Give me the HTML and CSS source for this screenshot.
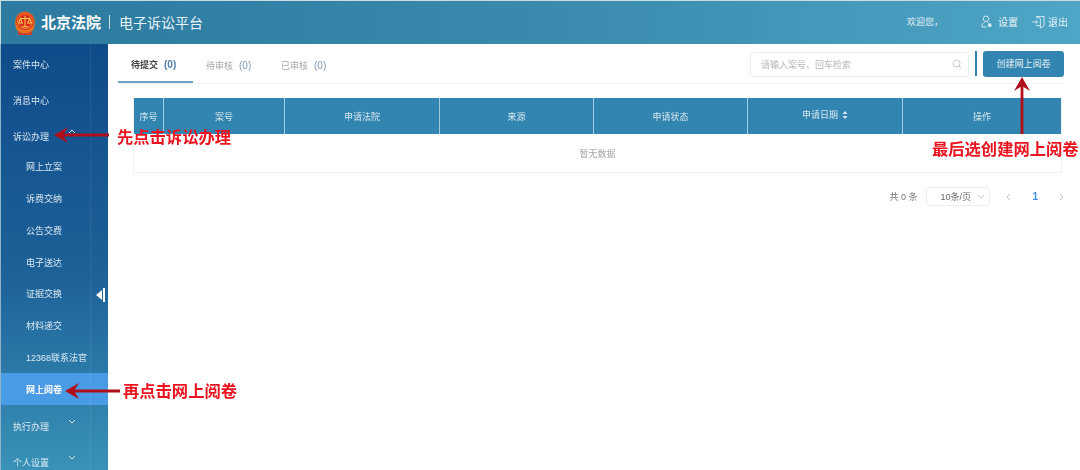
FILE: index.html
```html
<!DOCTYPE html>
<html lang="zh-CN">
<head>
  <meta charset="UTF-8">
  <title>电子诉讼平台</title>
  <link rel="stylesheet" href="styles.css">
</head>
<body>
  <div class="app">
    <header class="topbar">
      <svg class="emblem" viewBox="0 0 24 28">
        <path d="M3 22 Q-1 12 4 5 Q12 -2 20 5 Q25 12 21 22 Q12 29 3 22Z" fill="#e8701e"/>
        <circle cx="12" cy="12" r="9.500" fill="#dc2a1c"/>
        <circle cx="12" cy="12" r="8" fill="none" stroke="#f5a83a" stroke-width="0.8"/>
        <path d="M12 6v12M7 9h10M7 9l-2 5h4zM17 9l-2 5h4zM8.500 18h7" fill="none" stroke="#f8cf55" stroke-width="1.100"/>
        <path d="M4 23 Q12 28 20 23 L19 27 H5Z" fill="#e03a1c"/>
      </svg>
      <span class="brand">北京法院</span>
      <span class="brand-sep"></span>
      <span class="platform">电子诉讼平台</span>
      <div class="topbar-right">
        <span class="welcome">欢迎您，</span>
        <a class="top-link">
          <svg class="top-icon" viewBox="0 0 12 14"><circle cx="5.500" cy="4" r="3" fill="none" stroke="#dceef5"/><path d="M1 13c0-3 1.500-4.500 3-5M7 8c.7.300 1.200.700 1.500 1.200M1 13h5" fill="none" stroke="#dceef5"/><circle cx="9.500" cy="11" r="2" fill="#dceef5"/></svg>
          设置
        </a>
        <a class="top-link">
          <svg class="top-icon exit" viewBox="0 0 14 14"><path d="M5 3V1h8v10l-4 2.500V3.500L5 1M5 10v1h4" fill="none" stroke="#dceef5"/><path d="M0 7h6M4 5l2 2-2 2" fill="none" stroke="#dceef5"/></svg>
          退出
        </a>
      </div>
    </header>

    <div class="layout">
      <aside class="sidebar">
        <div class="nav-item">案件中心</div>
        <div class="nav-item">消息中心</div>
        <div class="nav-item">诉讼办理<svg class="chev" viewBox="0 0 8 5"><path d="M1 4l3-3 3 3" fill="none" stroke="#cfe3ee"/></svg></div>
        <div class="sub-list">
          <div class="sub-item">网上立案</div>
          <div class="sub-item">诉费交纳</div>
          <div class="sub-item">公告交费</div>
          <div class="sub-item">电子送达</div>
          <div class="sub-item">证据交换</div>
          <div class="sub-item">材料递交</div>
          <div class="sub-item">12368联系法官</div>
          <div class="sub-item active">网上阅卷</div>
        </div>
        <div class="nav-item">执行办理<svg class="chev" viewBox="0 0 8 5"><path d="M1 1l3 3 3-3" fill="none" stroke="#cfe3ee"/></svg></div>
        <div class="nav-item">个人设置<svg class="chev" viewBox="0 0 8 5"><path d="M1 1l3 3 3-3" fill="none" stroke="#cfe3ee"/></svg></div>
        <div class="collapse"><i></i><b></b></div>
      </aside>

      <main class="content">
        <div class="toolbar">
          <div class="tabs">
            <div class="tab current">待提交 <em>(0)</em></div>
            <div class="tab">待审核 <em>(0)</em></div>
            <div class="tab">已审核 <em>(0)</em></div>
          </div>
          <div class="search">
            <span>请输入案号、回车检索</span>
            <svg class="search-icon" viewBox="0 0 10 10"><circle cx="4.500" cy="4.500" r="3.500" fill="none" stroke="#c4ccd2"/><path d="M7 7l2 2" stroke="#c4ccd2"/></svg>
          </div>
          <span class="tool-bar-mark"></span>
          <button class="create-btn">创建网上阅卷</button>
        </div>

        <div class="table-wrap">
          <div class="table-head">
            <div class="th th-no">序号</div>
            <div class="th th-case">案号</div>
            <div class="th th-court">申请法院</div>
            <div class="th th-from">来源</div>
            <div class="th th-state">申请状态</div>
            <div class="th th-date">申请日期 <svg class="sort" viewBox="0 0 6 8"><path d="M3 0l2.500 3h-5zM3 8L.5 5h5z" fill="#dbe9f1"/></svg></div>
            <div class="th th-op">操作</div>
          </div>
          <div class="table-empty">暂无数据</div>
        </div>

        <div class="pager">
          <span class="total">共 0 条</span>
          <div class="page-size">10条/页<svg class="page-chev" viewBox="0 0 8 5"><path d="M1 1l3 3 3-3" fill="none" stroke="#c2c8cd"/></svg></div>
          <svg class="page-arrow" viewBox="0 0 5 8"><path d="M4 1L1 4l3 3" fill="none" stroke="#b9c0c6"/></svg>
          <span class="page-num">1</span>
          <svg class="page-arrow" viewBox="0 0 5 8"><path d="M1 1l3 3-3 3" fill="none" stroke="#b9c0c6"/></svg>
        </div>
      </main>
    </div>

    <!-- red notes drawn on top of the page -->
    <svg class="note-arrow arrow-one" viewBox="0 0 56 16"><path d="M56 8H8" stroke="#b00f1a" stroke-width="2.800"/><path d="M1 8L15 0 10 8 15 16Z" fill="#b00f1a"/></svg>
    <span class="note note-one">先点击诉讼办理</span>
    <svg class="note-arrow arrow-two" viewBox="0 0 56 16"><path d="M56 8H8" stroke="#b00f1a" stroke-width="2.800"/><path d="M1 8L15 0 10 8 15 16Z" fill="#b00f1a"/></svg>
    <span class="note note-two">再点击网上阅卷</span>
    <svg class="note-arrow arrow-three" viewBox="0 0 16 58"><path d="M8 58V8" stroke="#b00f1a" stroke-width="2.800"/><path d="M8 1L0 15 8 10 16 15Z" fill="#b00f1a"/></svg>
    <span class="note note-three">最后选创建网上阅卷</span>
  </div>
</body>
</html>
```

FILE: styles.css
```css
html, body {
  margin: 0;
  padding: 0;
  height: 100%;
  overflow: hidden;
  background: #fff;
}
body {
  font-family: "Liberation Sans", "Noto Sans CJK SC", sans-serif;
  font-size: 9px;
  color: #555;
}
.app {
  position: relative;
  width: 1080px;
  height: 470px;
  overflow: hidden;
  display: flex;
  flex-direction: column;
  filter: blur(0.4px);
}
.topbar {
  height: 44px;
  flex: none;
  box-sizing: border-box;
  border-top: 1px solid #c9dbe3;
  border-left: 1px solid #c9dbe3;
  background: linear-gradient(90deg, #2c7a9f 0%, #3a8aae 50%, #4ea5c5 100%);
  display: flex;
  align-items: center;
  padding: 0 0 2px 13px;
  color: #fff;
}
.emblem {
  width: 22px;
  height: 26px;
  margin: 2px 5px 0 0;
}
.brand {
  font-size: 15px;
  font-weight: bold;
}
.brand-sep {
  width: 1px;
  height: 14px;
  margin: 0 8px;
  background: #cfe2ec;
}
.platform {
  font-size: 14px;
  margin-left: 1px;
  color: #eaf4f8;
}
.topbar-right {
  margin-left: auto;
  display: flex;
  align-items: center;
  padding-right: 12px;
}
.welcome {
  font-size: 9px;
  color: #e6f2f7;
  width: 74px;
}
.top-link {
  display: flex;
  align-items: center;
  font-size: 10px;
  color: #e6f2f7;
  margin-right: 14px;
}
.top-link:last-child {
  margin-right: 0;
}
.top-icon {
  width: 11px;
  height: 13px;
  margin-right: 6px;
}
.top-icon.exit {
  width: 13px;
  height: 14px;
  margin-right: 3px;
}
.layout {
  flex: 1;
  display: flex;
  min-height: 0;
}
.sidebar {
  position: relative;
  width: 108px;
  flex: none;
  box-sizing: border-box;
  padding-top: 2px;
  border-left: 1px solid #8fb2c8;
  background: linear-gradient(180deg, #0f4b8a 0%, #1d6299 55%, #3a92b8 100%);
  color: #dbe8f1;
  overflow: hidden;
}
.sidebar::after {
  content: "";
  position: absolute;
  top: 0;
  bottom: 0;
  left: 89px;
  width: 1px;
  background: rgba(255, 255, 255, 0.06);
}
.nav-item {
  height: 36px;
  display: flex;
  align-items: center;
  padding-left: 12px;
  font-size: 9px;
}
.chev {
  width: 8px;
  height: 5px;
  margin: 0 0 9px 19px;
}
.sub-list {
  margin: -3px 0 3px;
}
.sub-item {
  height: 31.75px;
  display: flex;
  align-items: center;
  padding-left: 25px;
  font-size: 9px;
}
.sub-item.active {
  background: #4a9be6;
  color: #fff;
  font-weight: bold;
}
.collapse {
  position: absolute;
  top: 244px;
  left: 95px;
  display: flex;
  align-items: center;
  gap: 1px;
}
.collapse i {
  width: 0;
  height: 0;
  border-top: 5px solid transparent;
  border-bottom: 5px solid transparent;
  border-right: 6px solid #fff;
}
.collapse b {
  width: 2px;
  height: 14px;
  background: #fff;
}
.content {
  flex: 1;
  min-width: 0;
  padding: 0 16px 0 10px;
}
.toolbar {
  height: 39px;
  display: flex;
  align-items: center;
  border-bottom: 1px solid #f0f2f4;
  position: relative;
}
.tabs {
  display: flex;
  align-self: stretch;
  margin-right: auto;
}
.tab {
  width: 75px;
  box-sizing: border-box;
  display: flex;
  align-items: center;
  gap: 6px;
  padding: 3px 0 0 13px;
  font-size: 9px;
  color: #a8a8a8;
}
.tab em {
  font-style: normal;
  font-size: 10px;
  color: #7f9bb4;
}
.tab.current {
  color: #444;
  font-weight: bold;
  border-bottom: 2px solid #6f9fc0;
}
.tab.current em {
  color: #4d7fa8;
}
.search {
  width: 219px;
  height: 25px;
  box-sizing: border-box;
  display: flex;
  align-items: center;
  justify-content: space-between;
  padding: 0 6px 0 10px;
  margin-top: 1px;
  border: 1px solid #eceff2;
  border-radius: 3px;
  color: #b6b6b6;
}
.search-icon {
  width: 10px;
  height: 10px;
}
.tool-bar-mark {
  width: 2px;
  height: 25px;
  margin: 0 6px;
  background: #3283ad;
}
.create-btn {
  width: 81px;
  height: 26px;
  padding: 0;
  border: none;
  border-radius: 3px;
  background: #3285b0;
  color: #e4f0f6;
  font-family: inherit;
  font-size: 9px;
}
.table-wrap {
  margin: 14px 0 0 15px;
  width: 929px;
  box-sizing: border-box;
  border: 1px solid #eff1f3;
  border-top: none;
}
.table-head {
  display: grid;
  grid-template-columns: 30px 121px 155px 154px 154px 155px 158px;
  height: 36px;
  background: #3285b0;
  color: #d8e8f0;
}
.th {
  display: flex;
  align-items: center;
  justify-content: center;
  border-right: 1px solid #a8cbdc;
  box-sizing: border-box;
}
.th:last-child {
  border-right: none;
}
.th-date {
  gap: 4px;
  padding-bottom: 3px;
}
.sort {
  width: 6px;
  height: 8px;
}
.table-empty {
  height: 38px;
  display: flex;
  align-items: center;
  justify-content: center;
  color: #a5a5a5;
}
.pager {
  display: flex;
  align-items: center;
  justify-content: flex-end;
  margin-top: 14px;
  height: 19px;
}
.total {
  color: #777;
  margin-right: 9px;
}
.page-size {
  width: 64px;
  height: 19px;
  box-sizing: border-box;
  display: flex;
  align-items: center;
  justify-content: space-between;
  padding: 0 4px 0 13px;
  border: 1px solid #eceff2;
  border-radius: 3px;
  color: #666;
  margin-right: 16px;
}
.page-chev {
  width: 8px;
  height: 5px;
}
.page-arrow {
  width: 5px;
  height: 8px;
}
.page-num {
  font-size: 10px;
  color: #3f8ee0;
  font-weight: bold;
  margin: 0 21px;
}
.note {
  position: absolute;
  font-size: 16.3px;
  line-height: 20px;
  font-weight: bold;
  color: #ea1420;
  white-space: nowrap;
}
.note-one {
  left: 117px;
  top: 127px;
}
.note-two {
  left: 123px;
  top: 381px;
}
.note-three {
  left: 932px;
  top: 139px;
}
.note-arrow {
  position: absolute;
}
.arrow-one {
  left: 53px;
  top: 127px;
  width: 56px;
  height: 16px;
}
.arrow-two {
  left: 64px;
  top: 383px;
  width: 56px;
  height: 16px;
}
.arrow-three {
  left: 1014px;
  top: 76px;
  width: 16px;
  height: 58px;
}
```
